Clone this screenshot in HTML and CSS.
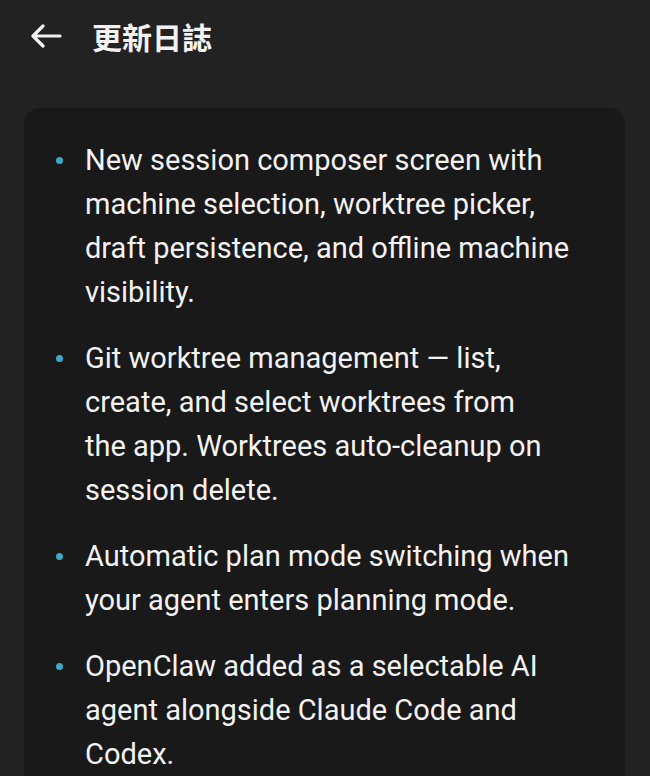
FILE: index.html
```html
<!DOCTYPE html>
<html lang="zh-Hant">
<head>
<meta charset="utf-8">
<link rel="stylesheet" href="styles.css">
</head>
<body>
<header class="topbar">
  <svg class="back" viewBox="0 0 32 24" width="32" height="24" aria-hidden="true">
    <path d="M30 12H3M13 2L3 12l10 10" fill="none" stroke="#f2f2f2" stroke-width="3.2" stroke-linecap="round" stroke-linejoin="round"/>
  </svg>
  <h1 class="title">更新日誌</h1>
</header>
<main class="card">
  <ul class="notes">
    <li><span class="l">New session composer screen with</span><span class="l">machine selection, worktree picker,</span><span class="l">draft persistence, and offline machine</span><span class="l">visibility.</span></li>
    <li><span class="l">Git worktree management — list,</span><span class="l">create, and select worktrees from</span><span class="l">the app. Worktrees auto-cleanup on</span><span class="l">session delete.</span></li>
    <li><span class="l">Automatic plan mode switching when</span><span class="l">your agent enters planning mode.</span></li>
    <li><span class="l">OpenClaw added as a selectable AI</span><span class="l">agent alongside Claude Code and</span><span class="l">Codex.</span></li>
  </ul>
</main>
</body>
</html>
```
FILE: styles.css
```css
html, body {
  margin: 0;
  padding: 0;
  background: #222222;
  height: 776px;
  overflow: hidden;
}
body {
  font-family: Roboto, "Noto Sans", "Noto Sans CJK TC", sans-serif;
  color: #f2f2f2;
}
.topbar {
  display: flex;
  align-items: center;
  height: 72px;
  padding-left: 30px;
}
.back {
  display: block;
  margin-right: 30px;
}
.title {
  margin: 0;
  font-family: "Noto Sans CJK TC", sans-serif;
  font-size: 30px;
  font-weight: 700;
  line-height: 1;
  letter-spacing: 0;
}
.card {
  margin: 36px 25px 0 24px;
  background: #191919;
  border-radius: 16px;
  padding: 30px 20px 40px 32px;
}
.notes {
  list-style: none;
  margin: 0;
  padding: 0;
  display: flex;
  flex-direction: column;
  gap: 22px;
}
.notes li {
  position: relative;
  padding-left: 29px;
  font-size: 29px;
  line-height: 44px;
}
.notes li::before {
  content: "";
  position: absolute;
  left: 0;
  top: 19px;
  width: 7px;
  height: 7px;
  border-radius: 50%;
  background: #3ba9cc;
}
.l {
  display: block;
  white-space: nowrap;
}
```
